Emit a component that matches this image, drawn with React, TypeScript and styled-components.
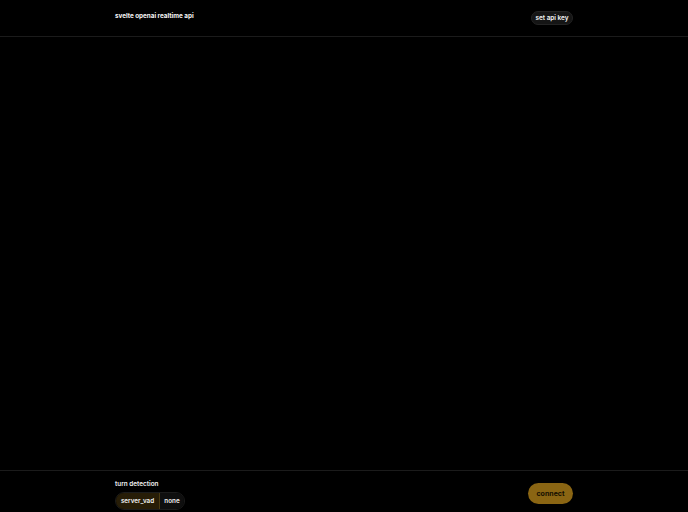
import React from "react";
import styled, { createGlobalStyle } from "styled-components";

const Global = createGlobalStyle`
  html, body { margin: 0; padding: 0; background: #000; }
  body {
    font-family: Inter, "Noto Sans", sans-serif;
    color: #f2f2f2;
    -webkit-font-smoothing: antialiased;
  }
  * { box-sizing: border-box; }
`;

const Page = styled.div`
  height: 512px;
  display: flex;
  flex-direction: column;
  background: #000;
`;

const Bar = styled.div<{ $top?: boolean }>`
  flex: none;
  border-${(p) => (p.$top ? "bottom" : "top")}: 1px solid #1b1b1b;
`;

const Inner = styled.div<{ $align?: string }>`
  width: 458px;
  margin: 0 auto;
  display: flex;
  justify-content: space-between;
  align-items: ${(p) => p.$align || "flex-start"};
`;

const Header = styled(Bar)`
  height: 37px;
  padding-top: 11px;
`;

const Title = styled.h1`
  margin: 1px 0 0;
  font-size: 6.3px;
  line-height: 8px;
  font-weight: 700;
  color: #f6f6f6;
`;

const GhostButton = styled.button`
  height: 14px;
  width: 42px;
  padding: 0;
  border-radius: 7px;
  border: 1px solid #232323;
  background: #151515;
  color: #f4f4f4;
  font-family: inherit;
  font-size: 6.4px;
  font-weight: 600;
  display: flex;
  align-items: center;
  justify-content: center;
`;

const Main = styled.main`
  flex: 1;
`;

const Footer = styled(Bar)`
  height: 42px;
  padding-top: 9px;
`;

const Group = styled.div`
  display: flex;
  flex-direction: column;
  gap: 4px;
`;

const Label = styled.div`
  font-size: 6.4px;
  line-height: 8px;
  font-weight: 600;
  color: #f2f2f2;
`;

const Segments = styled.div`
  display: flex;
  height: 18px;
  border-radius: 9px;
  overflow: hidden;
  border: 1px solid #1c1c1c;
`;

const Segment = styled.button<{ $active?: boolean; $w: number }>`
  width: ${(p) => p.$w}px;
  padding: 0;
  border: none;
  border-left: ${(p) => (p.$active ? "none" : "1px solid #4a3a12")};
  background: ${(p) => (p.$active ? "#271d07" : "#0f0f0f")};
  color: #f2f2f2;
  font-family: inherit;
  font-size: 6.3px;
  font-weight: 600;
  display: flex;
  align-items: center;
  justify-content: center;
`;

const ConnectButton = styled.button`
  margin-top: 3px;
  width: 45px;
  height: 21px;
  padding: 0;
  border: none;
  border-radius: 11px;
  background: #8a6513;
  color: #140e00;
  font-family: inherit;
  font-size: 7px;
  font-weight: 700;
  display: flex;
  align-items: center;
  justify-content: center;
`;

export default function App() {
  return (
    <>
      <Global />
      <Page>
        <Header $top>
          <Inner>
            <Title>svelte openai realtime api</Title>
            <GhostButton>set api key</GhostButton>
          </Inner>
        </Header>
        <Main />
        <Footer>
          <Inner>
            <Group>
              <Label>turn detection</Label>
              <Segments>
                <Segment $active $w={43}>server_vad</Segment>
                <Segment $w={25}>none</Segment>
              </Segments>
            </Group>
            <ConnectButton>connect</ConnectButton>
          </Inner>
        </Footer>
      </Page>
    </>
  );
}
